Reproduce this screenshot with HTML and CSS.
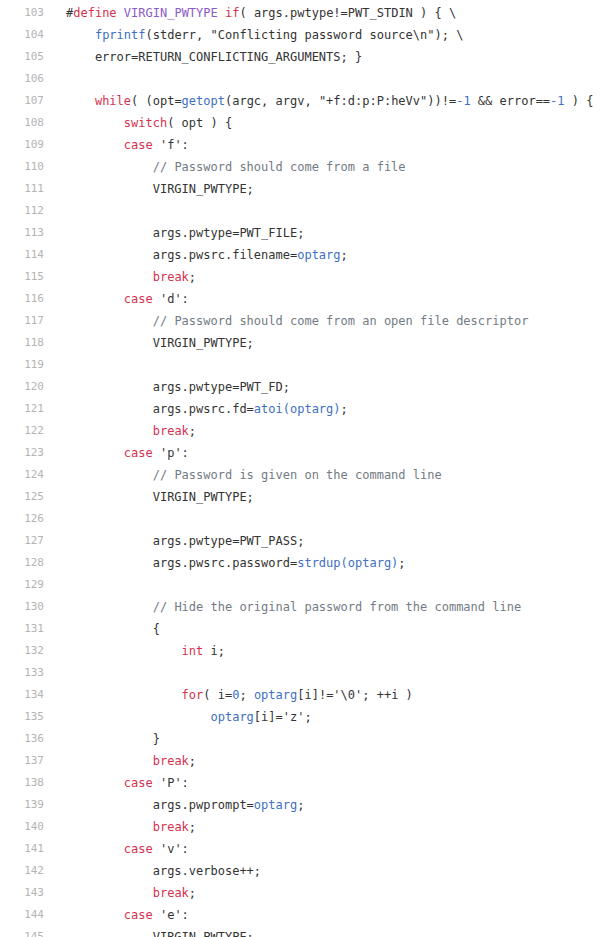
FILE: index.html
```html
<!DOCTYPE html>
<html>
<head>
<meta charset="utf-8">
<link rel="stylesheet" href="styles.css">
</head>
<body>
<div class="code">
<div class="row"><span class="ln">103</span><span class="src">#<span class="k">define</span> <span class="m">VIRGIN_PWTYPE</span> <span class="k">if</span>( args.pwtype!=PWT_STDIN ) { \</span></div>
<div class="row"><span class="ln">104</span><span class="src">    <span class="f">fprintf</span>(stderr, "Conflicting password source\n"); \</span></div>
<div class="row"><span class="ln">105</span><span class="src">    error=RETURN_CONFLICTING_ARGUMENTS; }</span></div>
<div class="row"><span class="ln">106</span><span class="src"></span></div>
<div class="row"><span class="ln">107</span><span class="src">    <span class="k">while</span>( (opt=<span class="f">getopt</span>(argc, argv, "+f:d:p:P:heVv"))!=<span class="f">-1</span> &amp;&amp; error==<span class="f">-1</span> ) {</span></div>
<div class="row"><span class="ln">108</span><span class="src">        <span class="k">switch</span>( opt ) {</span></div>
<div class="row"><span class="ln">109</span><span class="src">        <span class="k">case</span> 'f':</span></div>
<div class="row"><span class="ln">110</span><span class="src">            <span class="c">// Password should come from a file</span></span></div>
<div class="row"><span class="ln">111</span><span class="src">            VIRGIN_PWTYPE;</span></div>
<div class="row"><span class="ln">112</span><span class="src"></span></div>
<div class="row"><span class="ln">113</span><span class="src">            args.pwtype=PWT_FILE;</span></div>
<div class="row"><span class="ln">114</span><span class="src">            args.pwsrc.filename=<span class="f">optarg</span>;</span></div>
<div class="row"><span class="ln">115</span><span class="src">            <span class="k">break</span>;</span></div>
<div class="row"><span class="ln">116</span><span class="src">        <span class="k">case</span> 'd':</span></div>
<div class="row"><span class="ln">117</span><span class="src">            <span class="c">// Password should come from an open file descriptor</span></span></div>
<div class="row"><span class="ln">118</span><span class="src">            VIRGIN_PWTYPE;</span></div>
<div class="row"><span class="ln">119</span><span class="src"></span></div>
<div class="row"><span class="ln">120</span><span class="src">            args.pwtype=PWT_FD;</span></div>
<div class="row"><span class="ln">121</span><span class="src">            args.pwsrc.fd=<span class="f">atoi(optarg)</span>;</span></div>
<div class="row"><span class="ln">122</span><span class="src">            <span class="k">break</span>;</span></div>
<div class="row"><span class="ln">123</span><span class="src">        <span class="k">case</span> 'p':</span></div>
<div class="row"><span class="ln">124</span><span class="src">            <span class="c">// Password is given on the command line</span></span></div>
<div class="row"><span class="ln">125</span><span class="src">            VIRGIN_PWTYPE;</span></div>
<div class="row"><span class="ln">126</span><span class="src"></span></div>
<div class="row"><span class="ln">127</span><span class="src">            args.pwtype=PWT_PASS;</span></div>
<div class="row"><span class="ln">128</span><span class="src">            args.pwsrc.password=<span class="f">strdup(optarg)</span>;</span></div>
<div class="row"><span class="ln">129</span><span class="src"></span></div>
<div class="row"><span class="ln">130</span><span class="src">            <span class="c">// Hide the original password from the command line</span></span></div>
<div class="row"><span class="ln">131</span><span class="src">            {</span></div>
<div class="row"><span class="ln">132</span><span class="src">                <span class="k">int</span> i;</span></div>
<div class="row"><span class="ln">133</span><span class="src"></span></div>
<div class="row"><span class="ln">134</span><span class="src">                <span class="k">for</span>( i=<span class="f">0</span>; <span class="f">optarg</span>[i]!='\0'; ++i )</span></div>
<div class="row"><span class="ln">135</span><span class="src">                    <span class="f">optarg</span>[i]='z';</span></div>
<div class="row"><span class="ln">136</span><span class="src">            }</span></div>
<div class="row"><span class="ln">137</span><span class="src">            <span class="k">break</span>;</span></div>
<div class="row"><span class="ln">138</span><span class="src">        <span class="k">case</span> 'P':</span></div>
<div class="row"><span class="ln">139</span><span class="src">            args.pwprompt=<span class="f">optarg</span>;</span></div>
<div class="row"><span class="ln">140</span><span class="src">            <span class="k">break</span>;</span></div>
<div class="row"><span class="ln">141</span><span class="src">        <span class="k">case</span> 'v':</span></div>
<div class="row"><span class="ln">142</span><span class="src">            args.verbose++;</span></div>
<div class="row"><span class="ln">143</span><span class="src">            <span class="k">break</span>;</span></div>
<div class="row"><span class="ln">144</span><span class="src">        <span class="k">case</span> 'e':</span></div>
<div class="row"><span class="ln">145</span><span class="src">            VIRGIN_PWTYPE;</span></div>
</div>
</body>
</html>
```
FILE: styles.css
```css
html, body {
  margin: 0;
  padding: 0;
  background: #ffffff;
  overflow: hidden;
}
.code {
  padding-top: 2px;
  display: flex;
  flex-direction: column;
}
.row {
  display: flex;
  height: 22px;
  line-height: 22px;
  white-space: pre;
}
.ln {
  width: 44px;
  text-align: right;
  flex: none;
  font-family: "DejaVu Sans Mono", monospace;
  font-size: 11px;
  color: #b4b4b4;
}
.src {
  padding-left: 22px;
  font-family: "DejaVu Sans Mono", monospace;
  font-size: 12px;
  color: #333333;
}
.k { color: #d6314f; }
.f { color: #3e6fc4; }
.m { color: #8a5bc9; }
.c { color: #737b84; }
```
